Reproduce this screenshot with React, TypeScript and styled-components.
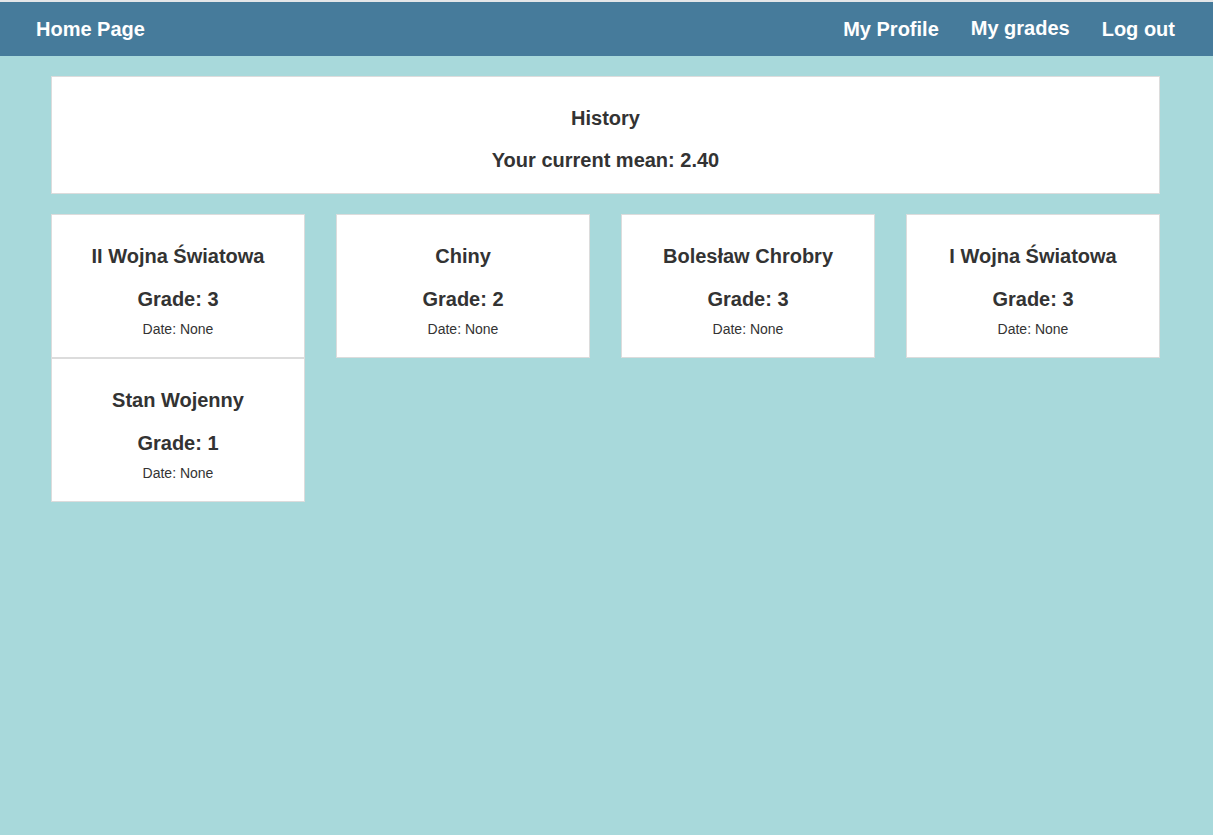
import React from "react";
import styled, { createGlobalStyle } from "styled-components";

const Global = createGlobalStyle`
  html, body {
    margin: 0;
    padding: 0;
    background: #a8d9db;
    font-family: "Liberation Sans", Arial, sans-serif;
    color: #333;
  }
  body {
    border-top: 2px solid #e4e6e8;
    min-height: 833px;
  }
`;

const NavBar = styled.nav`
  box-sizing: border-box;
  height: 54px;
  background: #467b9b;
  display: flex;
  align-items: center;
  justify-content: space-between;
  padding: 0 38px 0 36px;
`;

const NavLinks = styled.div`
  display: flex;
  align-items: center;
  gap: 32px;
  padding-left: 2px;
`;

const NavLink = styled.a<{ $raised?: boolean }>`
  color: #fff;
  font-weight: bold;
  font-size: 20px;
  line-height: 23px;
  text-decoration: none;
  cursor: pointer;
  margin-bottom: ${(p) => (p.$raised ? "2px" : "0")};
`;

const Main = styled.main`
  width: 1109px;
  margin: 20px 0 0 51px;
  display: flex;
  flex-direction: column;
  gap: 20px;
`;

const Panel = styled.section`
  background: #fff;
  border: 1px solid #dcdcdc;
  text-align: center;
  padding: 30px 0 21px;
  display: flex;
  flex-direction: column;
  gap: 19px;
`;

const PanelHeading = styled.h3`
  margin: 0;
  font-size: 20px;
  line-height: 23px;
  font-weight: bold;
  color: #333;
`;

const Grid = styled.div`
  display: grid;
  grid-template-columns: repeat(4, 254px);
  column-gap: 31px;
  row-gap: 0;
`;

const Card = styled.div`
  background: #fff;
  border: 1px solid #dcdcdc;
  text-align: center;
  padding: 30px 0 20px;
  display: flex;
  flex-direction: column;
`;

const CardTitle = styled.h3`
  margin: 0 0 20px;
  font-size: 20px;
  line-height: 23px;
  font-weight: bold;
  color: #333;
`;

const CardGrade = styled.h3`
  margin: 0 0 10px;
  font-size: 20px;
  line-height: 23px;
  font-weight: bold;
  color: #333;
`;

const CardDate = styled.p`
  margin: 0;
  font-size: 14px;
  line-height: 16px;
  color: #333;
`;

const grades = [
  { name: "II Wojna Światowa", grade: 3 },
  { name: "Chiny", grade: 2 },
  { name: "Bolesław Chrobry", grade: 3 },
  { name: "I Wojna Światowa", grade: 3 },
  { name: "Stan Wojenny", grade: 1 },
];

export default function App() {
  const mean = grades.reduce((s, g) => s + g.grade, 0) / grades.length;
  return (
    <>
      <Global />
      <NavBar>
        <NavLink>Home Page</NavLink>
        <NavLinks>
          <NavLink>My Profile</NavLink>
          <NavLink $raised>My grades</NavLink>
          <NavLink>Log out</NavLink>
        </NavLinks>
      </NavBar>
      <Main>
        <Panel>
          <PanelHeading>History</PanelHeading>
          <PanelHeading>Your current mean: {mean.toFixed(2)}</PanelHeading>
        </Panel>
        <Grid>
          {grades.map((g) => (
            <Card key={g.name}>
              <CardTitle>{g.name}</CardTitle>
              <CardGrade>Grade: {g.grade}</CardGrade>
              <CardDate>Date: None</CardDate>
            </Card>
          ))}
        </Grid>
      </Main>
    </>
  );
}
